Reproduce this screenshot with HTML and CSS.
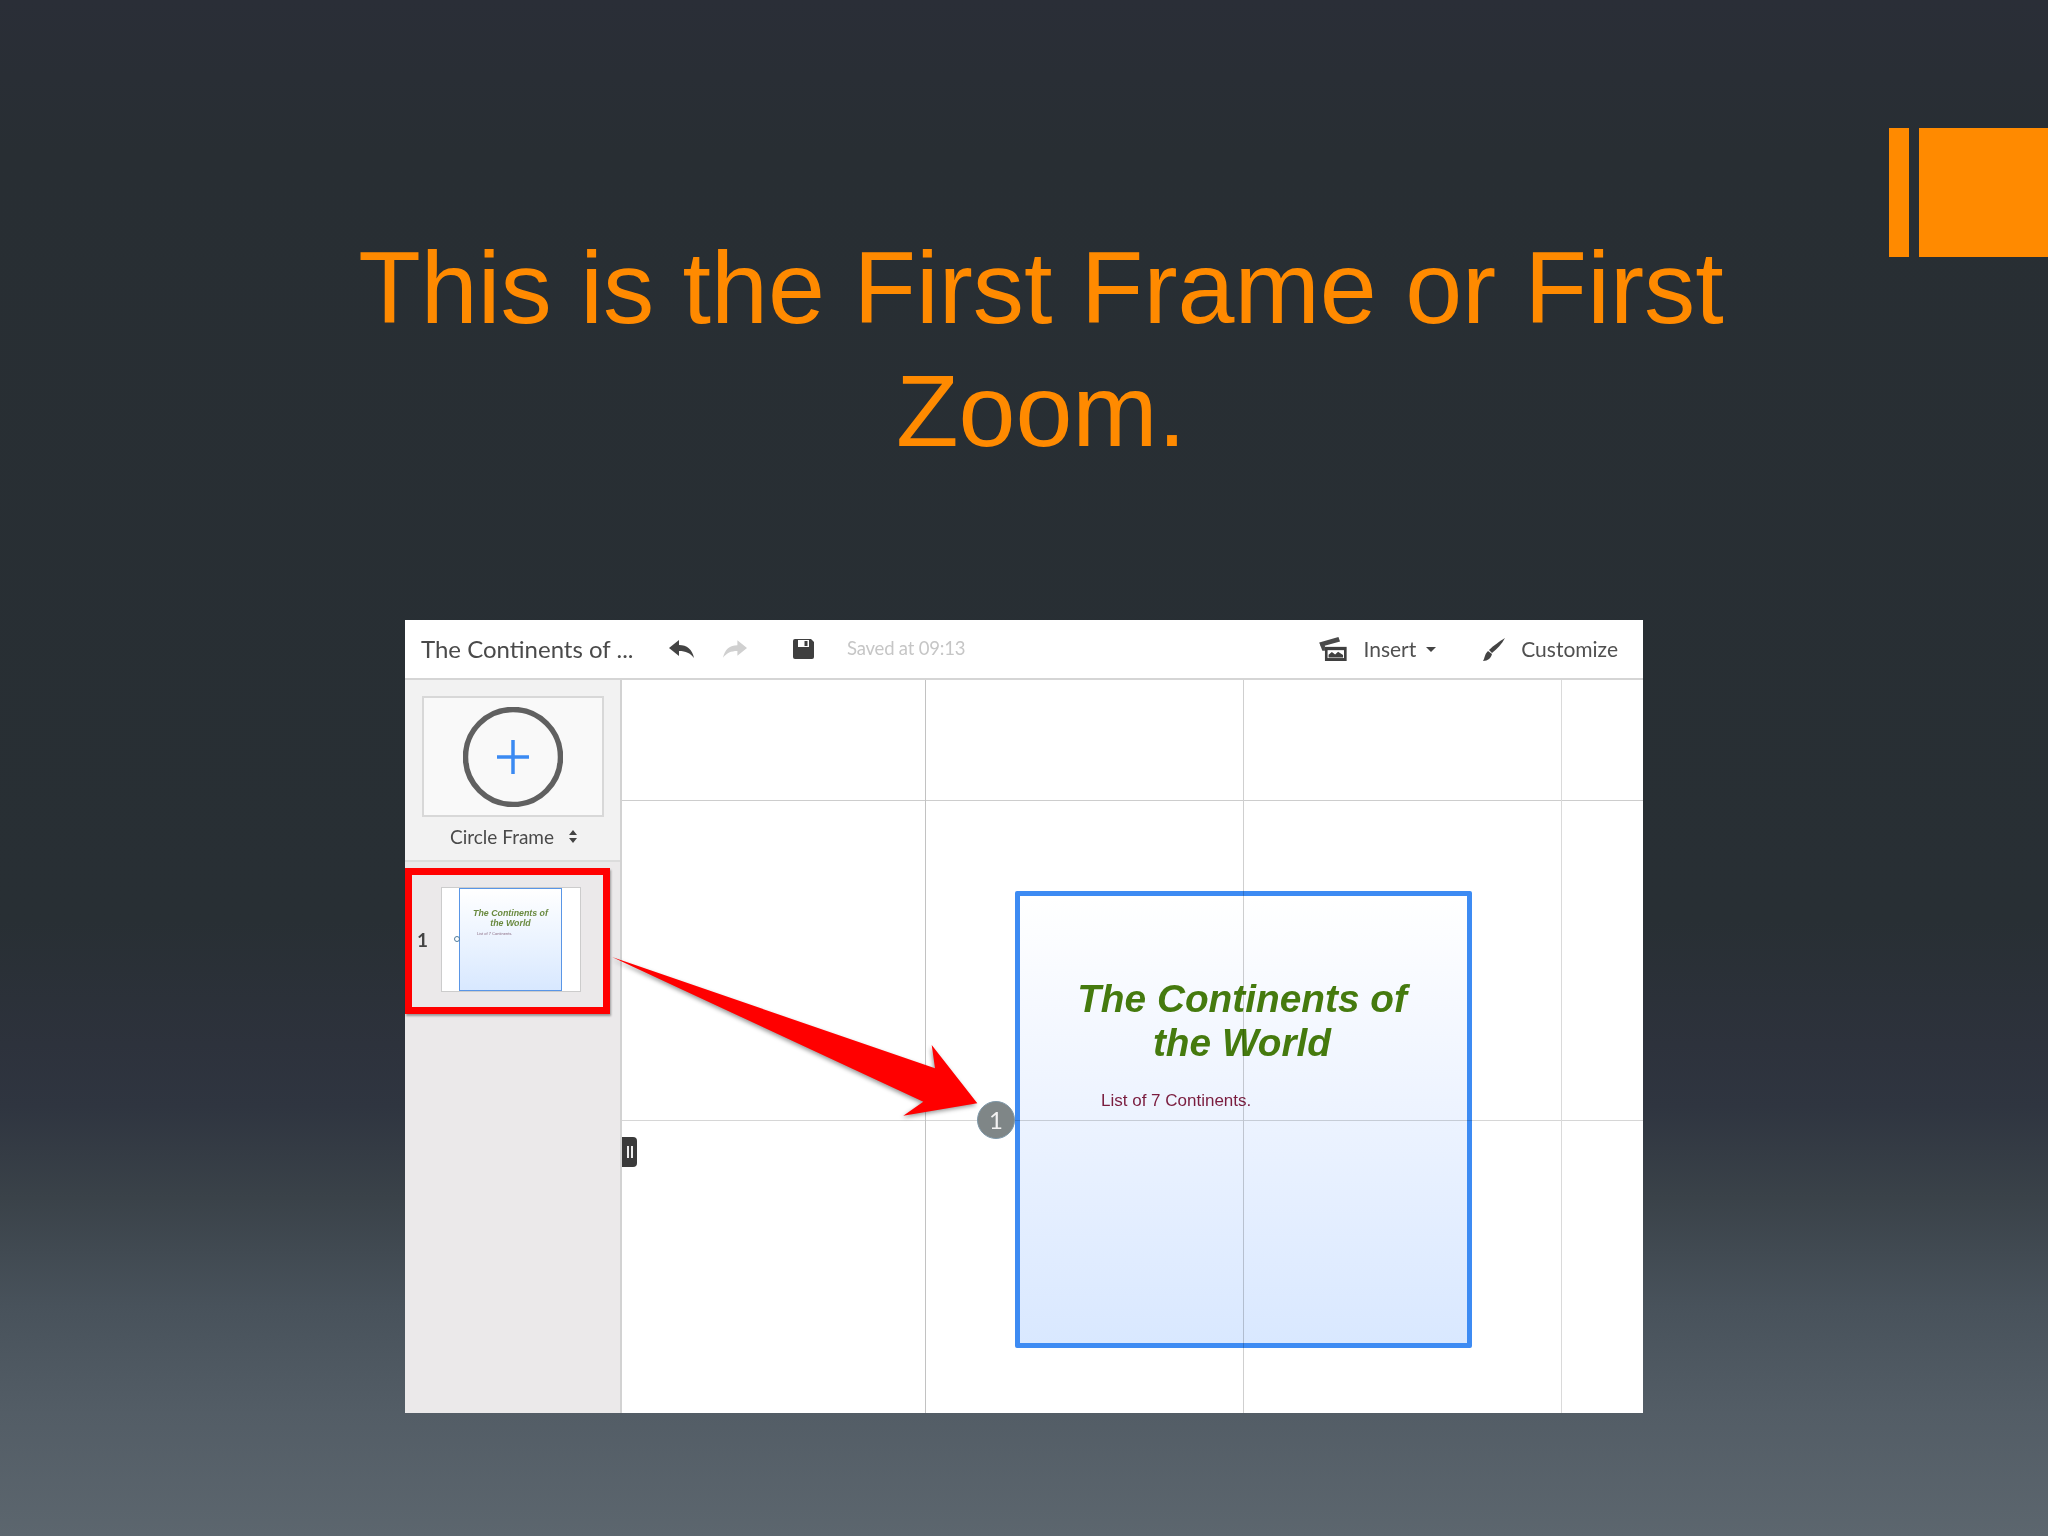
FILE: index.html
```html
<!DOCTYPE html>
<html lang="en">
<head>
<meta charset="utf-8">
<title>First Frame</title>
<link rel="stylesheet" href="styles.css">
</head>
<body>
<main class="slide">
  <div class="accent"><span class="accent-thin"></span><span class="accent-wide"></span></div>
  <h1 class="slide-title">This is the First Frame or First<br>Zoom.</h1>
  <section class="app">
    <header class="toolbar">
      <span class="doc-name">The Continents of ...</span>
      <svg class="ico undo" viewBox="0 0 25 18"><path d="M0 8 10 0v5c8 0 13 4 15 13-4-5-8-7-15-7v5z" fill="#444"/></svg>
      <svg class="ico redo" viewBox="0 0 25 18"><path d="M25 8 15 0v5C7 5 2 9 0 18c4-5 8-7 15-7v5z" fill="#d0d0d0"/></svg>
      <svg class="ico save" viewBox="0 0 21 20"><path d="M2 0h16l3 3v15a2 2 0 0 1-2 2H2a2 2 0 0 1-2-2V2a2 2 0 0 1 2-2z" fill="#3f3f3f"/><path d="M5 1h11v7H5z" fill="#fff"/><path d="M11.500 2h3v5h-3z" fill="#3f3f3f"/></svg>
      <span class="saved">Saved at 09:13</span>
      <span class="spacer"></span>
      <svg class="ico insert" viewBox="0 0 83 73"><path d="M0 17 58 0l5 14L5 30z" fill="#4a4a4a"/><path d="M0 17l9 25h8V26z" fill="#4a4a4a"/><path d="M17 30h66v43H17z" fill="#3f3f3f"/><path d="M25 40h50v24H25z" fill="#fff"/><path d="M28 62V54l10-8 10 7 9-8 15 10v7z" fill="#3f3f3f"/></svg>
      <span class="tool-label">Insert</span>
      <span class="caret"></span>
      <svg class="ico brush" viewBox="0 0 22 23"><path d="M22 0c-3 6-8 11-13 15l-3-3C10 8 17 3 22 0z" fill="#444"/><path d="M5 13l4 3c-1 4-4 7-9 7 2-3 1-6 5-10z" fill="#444"/></svg>
      <span class="tool-label">Customize</span>
    </header>
    <div class="workspace">
      <aside class="sidebar">
        <div class="picker">
          <div class="frame-card">
            <svg class="circle-ico" viewBox="0 0 100 100"><circle cx="50" cy="50" r="47.500" fill="none" stroke="#606060" stroke-width="5.500"/><path d="M34 50h32M50 33v34" fill="none" stroke="#3b8af2" stroke-width="3.500"/></svg>
          </div>
          <div class="frame-select"><span>Circle Frame</span><svg class="updown" viewBox="0 0 8 13"><path d="M4 0l4 5H0zM4 13 0 8h8z" fill="#444"/></svg></div>
        </div>
        <div class="thumb-row">
          <span class="thumb-num">1</span>
          <div class="thumb">
            <span class="thumb-dot"></span>
            <div class="thumb-slide">
              <p class="thumb-title">The Continents of<br>the World</p>
              <p class="thumb-list">List of 7 Continents.</p>
            </div>
          </div>
        </div>
      </aside>
      <div class="canvas">
        <div class="handle"><span></span><span></span></div>
        <div class="frame">
          <h2 class="frame-title">The Continents of<br>the World</h2>
          <p class="frame-list">List of 7 Continents.</p>
        </div>
        <div class="gridlines"></div>
        <div class="badge">1</div>
      </div>
    </div>
    <div class="callout"></div>
    <svg class="arrow" viewBox="0 0 400 190"><path d="M2 4 325 115.300 321.700 92 367.300 150.300 293.300 162.700 313.300 148.700z" fill="#f00"/></svg>
  </section>
</main>
</body>
</html>
```

FILE: styles.css
```css
* { box-sizing: border-box; }
html, body { margin: 0; padding: 0; }
body { width: 2048px; height: 1536px; overflow: hidden; }

.slide {
  position: relative;
  width: 2048px;
  height: 1536px;
  padding-top: 226px;
  overflow: hidden;
  background: linear-gradient(180deg, #2a2e37 0%, #282e33 10%, #282f34 60%, #2d323c 68%, #2f3540 72%, #3a4249 78%, #48525b 85%, #535d66 92%, #5c666e 100%);
}

.accent { position: absolute; top: 128px; left: 1889px; right: 0; height: 129px; display: flex; gap: 10px; }
.accent-thin { width: 20px; background: #ff8a00; }
.accent-wide { flex: 1; background: #ff8a00; }

.slide-title {
  margin: 0 0 0 339px;
  width: 1404px;
  font: 400 102.400px/123px "Liberation Sans", Arial, sans-serif;
  color: #ff8a00;
  text-align: center;
}

.app {
  position: relative;
  width: 1238px;
  height: 793px;
  margin: 148px 0 0 405px;
  background: #fff;
  font-family: Lato, sans-serif;
  display: flex;
  flex-direction: column;
  filter: blur(.4px);
}

.toolbar {
  height: 60px;
  flex: none;
  display: flex;
  align-items: center;
  padding: 0 25px 0 16px;
  background: #fff;
  border-bottom: 2px solid #d5d5d5;
}
.doc-name { font-size: 24px; color: #4a4a4a; width: 248px; white-space: nowrap; margin-bottom: 2px; }
.ico { flex: none; display: block; }
.undo { width: 25px; height: 18px; }
.redo { width: 24px; height: 18px; margin-left: 29px; }
.save { width: 21px; height: 20px; margin-left: 46px; }
.saved { font-size: 18.500px; letter-spacing: -.2px; color: #c6c6c6; margin-left: 33px; margin-bottom: 2px; white-space: nowrap; }
.spacer { flex: 1; }
.insert { width: 28px; height: 24px; }
.tool-label { font-size: 21px; color: #505050; margin-left: 16px; margin-bottom: 2px; white-space: nowrap; }
.caret { width: 0; height: 0; border: 5px solid transparent; border-top-color: #444; border-bottom: 0; margin-left: 10px; }
.brush { width: 22px; height: 23px; margin-left: 47px; }

.workspace { flex: 1; display: flex; min-height: 0; }

.sidebar { width: 217px; flex: none; background: #ebe9ea; border-right: 2px solid #d2d2d2; display: flex; flex-direction: column; }
.picker { height: 182px; padding: 16px 0 0 17px; border-bottom: 2px solid #dcdcdc; background: #f2f2f2; }
.frame-card { width: 182px; height: 121px; background: #f9f9f9; border: 2px solid #d8d8d8; display: flex; align-items: center; justify-content: center; }
.circle-ico { width: 100px; height: 100px; }
.frame-select { display: flex; align-items: center; gap: 15px; margin: 8px 0 0 28px; font-size: 19px; color: #4a4a4a; }
.updown { width: 8px; height: 13px; }

.thumb-row { height: 154px; display: flex; align-items: center; padding-left: 12px; }
.thumb-num { width: 24px; font: 700 19px Lato, sans-serif; color: #444; }
.thumb { position: relative; width: 140px; height: 105px; background: #fff; border: 1px solid #ccc; display: flex; padding: 0 18px 0 17px; }
.thumb-dot { position: absolute; left: 12px; top: 50%; width: 6px; height: 6px; margin-top: -3px; border: 1.500px solid #4e7c9e; border-radius: 50%; }
.thumb-slide { width: 103px; height: 103px; border: 1px solid #5a96e6; background: linear-gradient(180deg, #fff 0%, #d8e8ff 100%); padding-top: 19px; }
.thumb-title { margin: 0; font: italic 700 8.800px/10px "Liberation Sans", sans-serif; color: #6a8a40; text-align: center; }
.thumb-list { margin: 3px 0 0 17px; font: 400 4px/6px "Liberation Sans", sans-serif; color: #8a6a80; white-space: nowrap; }

.canvas { position: relative; flex: 1; background: #fff; overflow: hidden; }
.gridlines {
  position: absolute;
  inset: 0;
  background:
    linear-gradient(#c2c2c2, #c2c2c2) 303px 0 / 1px 100% no-repeat,
    linear-gradient(#cfcfcf, #cfcfcf) 621px 0 / 1px 100% no-repeat,
    linear-gradient(#dadada, #dadada) 939px 0 / 1px 100% no-repeat,
    linear-gradient(#cdcdcd, #cdcdcd) 0 120px / 100% 1px no-repeat,
    linear-gradient(#d6d6d6, #d6d6d6) 0 440px / 100% 1px no-repeat;
  mix-blend-mode: multiply;
}
.handle { position: absolute; left: 0; top: 457px; width: 15px; height: 30px; background: #3a3a3a; border-radius: 0 4px 4px 0; display: flex; align-items: center; justify-content: center; gap: 2px; }
.handle span { width: 2px; height: 12px; background: #eee; }
.frame { position: absolute; left: 393px; top: 211px; width: 457px; height: 457px; border: 5px solid #3d8bf3; border-radius: 2px; background: linear-gradient(180deg, #fff 0%, #f0f5ff 40%, #d9e8ff 100%); }
.frame-title { margin: 81px 0 0 0; padding-right: 3px; font: italic 700 38.800px/44px "Liberation Sans", sans-serif; color: #457a0e; text-align: center; }
.frame-list { margin: 25px 0 0 81px; font: 400 17px/22px "Liberation Sans", sans-serif; color: #7a1c3e; white-space: nowrap; }
.badge { position: absolute; left: 355px; top: 421px; width: 38px; height: 38px; border-radius: 50%; background: #7f8687; border: 1px solid #7d97a8; color: #f2f2f2; font-size: 24px; line-height: 36px; text-align: center; }

.callout { position: absolute; left: 0; top: 248px; width: 205px; height: 146px; border: 7px solid #f00; box-shadow: 1px 2px 2px rgba(0,0,0,.35); }
.arrow { position: absolute; left: 205px; top: 333px; width: 400px; height: 190px; overflow: visible; filter: drop-shadow(-1px 2px 2px rgba(0,0,0,.4)); }
```
